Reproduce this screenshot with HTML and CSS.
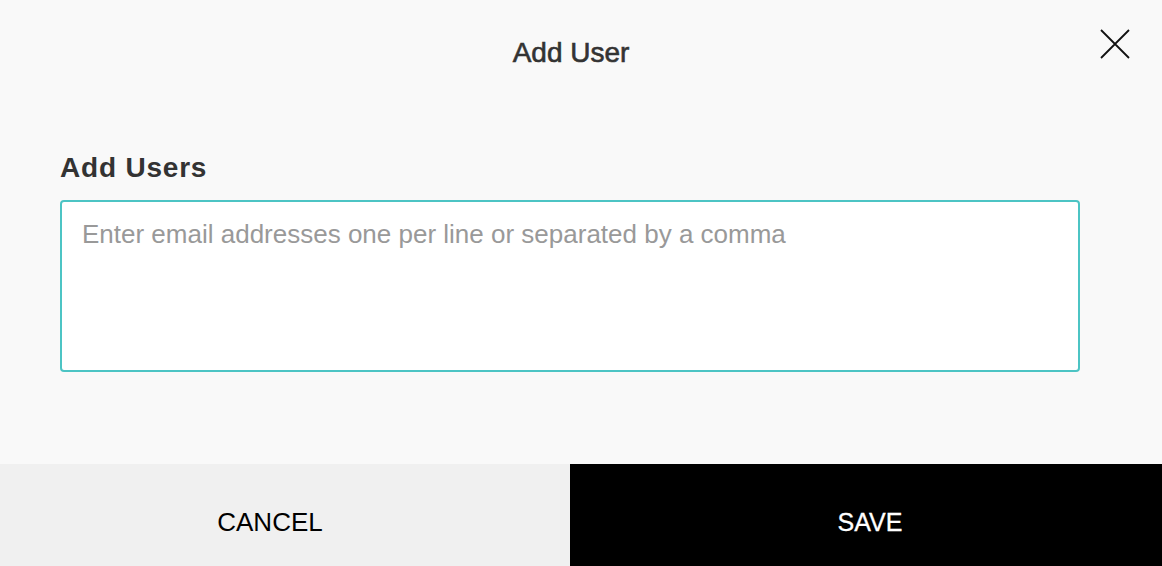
FILE: index.html
```html
<!DOCTYPE html>
<html lang="en">

<head>
  <meta charset="UTF-8">
  <meta name="viewport" content="width=device-width, initial-scale=1.0">
  <title>Add User</title>
  <link rel="stylesheet" href="styles.css">
</head>

<body>
  <div class="modal">
    <div class="modal-header">
      <h1 class="modal-title">Add User</h1>
      <button type="button" class="close" aria-label="Close">
        <svg width="30" height="30" viewBox="0 0 30 30">
          <path d="M1 1 L29 29 M29 1 L1 29" stroke="#111" stroke-width="1.8" fill="none" />
        </svg>
      </button>
    </div>

    <div class="modal-body">
      <label class="field-label" for="emails">Add Users</label>
      <textarea id="emails" class="emails" placeholder="Enter email addresses one per line or separated by a comma"></textarea>
    </div>

    <div class="modal-footer">
      <button type="button" class="btn cancel">CANCEL</button>
      <button type="button" class="btn save">SAVE</button>
    </div>
  </div>
</body>

</html>
```

FILE: styles.css
```css
* {
  box-sizing: border-box;
}

body {
  margin: 0;
  font-family: "Liberation Sans", Arial, sans-serif;
  background-color: #f9f9f9;
}

.modal {
  height: 566px;
  display: flex;
  flex-direction: column;
}

.modal-header {
  position: relative;
  padding: 36px 20px 0 0;
  display: flex;
  justify-content: center;
}

.modal-title {
  margin: 0;
  font-size: 28px;
  line-height: 34px;
  font-weight: normal;
  color: #333;
  -webkit-text-stroke: 0.6px #333;
}

.close {
  position: absolute;
  top: 29px;
  right: 32px;
  padding: 0;
  border: none;
  background: transparent;
  cursor: pointer;
  line-height: 0;
}

.modal-body {
  flex: 1;
  padding: 81px 82px 0 60px;
  display: flex;
  flex-direction: column;
}

.field-label {
  font-size: 28px;
  line-height: 34px;
  font-weight: bold;
  letter-spacing: 0.8px;
  color: #333;
  margin-bottom: 15px;
}

.emails {
  width: 1020px;
  height: 172px;
  padding: 17px 20px;
  border: 2px solid #4cc4c4;
  border-radius: 4px;
  background-color: #fff;
  font-family: inherit;
  font-size: 26px;
  line-height: 30px;
  color: #333;
  resize: none;
  outline: none;
}

.emails::placeholder {
  color: #999;
}

.modal-footer {
  display: flex;
  height: 102px;
}

.btn {
  border: none;
  margin: 0;
  padding: 43px 0 29px;
  font-family: inherit;
  font-size: 26px;
  line-height: 30px;
  cursor: pointer;
}

.btn.cancel {
  flex: 0 0 570px;
  padding-right: 30px;
  background-color: #f0f0f0;
  color: #000;
}

.btn.save {
  flex: 1;
  padding-left: 8px;
  font-size: 25px;
  background-color: #000;
  color: #fff;
  -webkit-text-stroke: 0.3px #fff;
}
```
